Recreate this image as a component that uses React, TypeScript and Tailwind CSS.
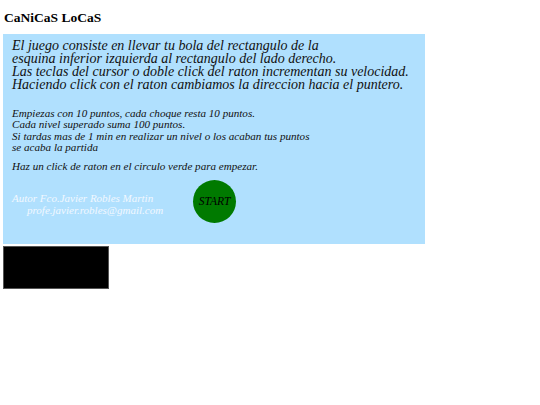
export default function App() {
  return (
    <div className="w-[540px] h-[405px] bg-white font-['Liberation_Serif',serif] text-black">
      <div className="pl-[4px] pt-[10px] text-[13.5px] font-bold leading-[16px]">CaNiCaS LoCaS</div>
      <div className="ml-[3px] mt-[8px] w-[422px] h-[210px] bg-[#b0e0fe] italic flex flex-col whitespace-nowrap">
        <div className="pl-[9px] pt-[5px] text-[14px] leading-[13px] text-[#111]">
          <div>El juego consiste en llevar tu bola del rectangulo de la</div>
          <div>esquina inferior izquierda al rectangulo del lado derecho.</div>
          <div>Las teclas del cursor o doble click del raton incrementan su velocidad.</div>
          <div>Haciendo click con el raton cambiamos la direccion hacia el puntero.</div>
        </div>
        <div className="pl-[9px] mt-[17px] text-[11.1px] leading-[11.3px] text-[#111]">
          <div>Empiezas con 10 puntos, cada choque resta 10 puntos.</div>
          <div>Cada nivel superado suma 100 puntos.</div>
          <div>Si tardas mas de 1 min en realizar un nivel o los acaban tus puntos</div>
          <div>se acaba la partida</div>
          <div className="mt-[8px]">Haz un click de raton en el circulo verde para empezar.</div>
        </div>
        <div className="flex items-start mt-[8px]">
          <div className="pl-[9px] pt-[13px] text-[11px] leading-[11.5px] text-[#f2f8ff] w-[190px]">
            <div>Autor Fco.Javier Robles Martin</div>
            <div className="pl-[15px]">profe.javier.robles@gmail.com</div>
          </div>
          <div className="w-[43px] h-[43px] rounded-full bg-[#007a00] flex items-center justify-center text-[11.5px]">START</div>
        </div>
      </div>
      <div className="ml-[3px] mt-[2px] w-[106px] h-[43px] bg-black border border-[#555]" />
    </div>
  );
}
